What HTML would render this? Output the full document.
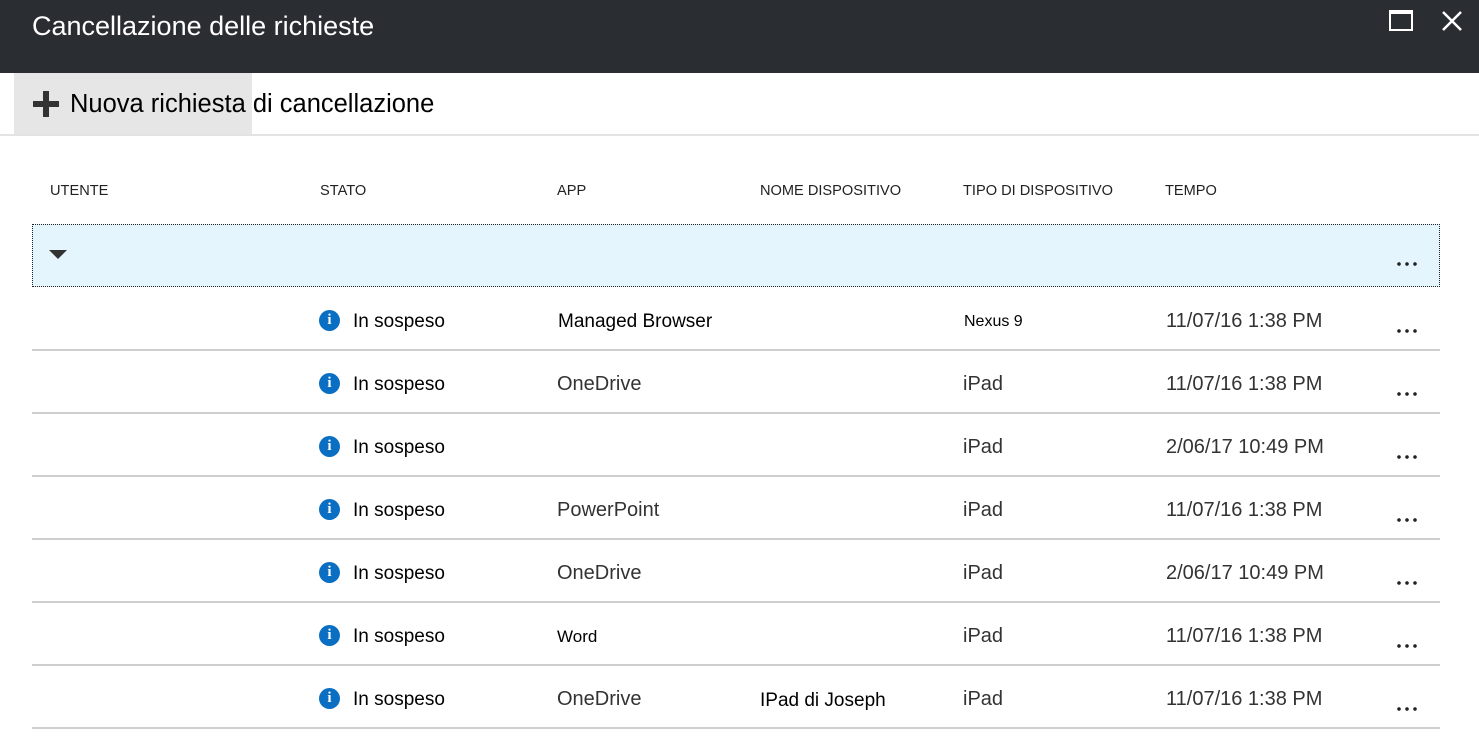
<!DOCTYPE html>
<html><head><meta charset="utf-8"><style>
body{margin:0;width:1479px;height:739px;background:#fff;font-family:"Liberation Sans",sans-serif;position:relative;overflow:hidden}
.hdr{position:absolute;left:0;top:0;width:1479px;height:73px;background:#2a2d32}
.title{position:absolute;left:32px;top:11px;color:#fff;font-size:27px}
.btn{position:absolute;left:14px;top:73px;width:238px;height:61px;background:#e6e6e6}
.tb{position:absolute;left:70px;top:90px;font-size:25.5px;color:#000}
.div{position:absolute;left:0;top:134px;width:1479px;height:2px;background:#e3e3e3}
.th{position:absolute;top:183px;font-size:14.6px;color:#222}
.grp{position:absolute;left:32px;top:224px;width:1406px;height:61px;background:#e5f5fd;border:1px dotted #222}
.t{position:absolute;font-size:19px}
.g{color:#333;font-size:20px}
.line{position:absolute;left:32px;width:1408px;height:2px;background:#cfcfcf}
.ic{position:absolute;width:21px;height:21px;border-radius:50%;background:#0a6fc2;color:#fff;font:bold 15px "Liberation Serif",serif;text-align:center;line-height:21px}
.dots{position:absolute;left:1395px;width:24px;height:4px;background:radial-gradient(circle,#222 1.6px,transparent 2px) 0 0/8px 4px repeat-x}
</style></head><body>
<div class="hdr"><div class="title">Cancellazione delle richieste</div>
<div style="position:absolute;left:1389px;top:10px;border:2px solid #fff;border-top-width:4px;box-sizing:border-box;width:24px;height:21px"></div>
<svg style="position:absolute;left:1441px;top:10px" width="22" height="22"><path d="M2 2L20 20M20 2L2 20" stroke="#fff" stroke-width="2.5"/></svg>
</div>
<div class="btn"></div>
<svg style="position:absolute;left:32px;top:90px" width="28" height="28"><path d="M14 1V27M1 14H27" stroke="#333" stroke-width="6"/></svg>
<div class="tb">Nuova richiesta di cancellazione</div>
<div class="div"></div>
<div class="th" style="left:50px">UTENTE</div>
<div class="th" style="left:320px">STATO</div>
<div class="th" style="left:557px">APP</div>
<div class="th" style="left:760px">NOME DISPOSITIVO</div>
<div class="th" style="left:963px">TIPO DI DISPOSITIVO</div>
<div class="th" style="left:1165px">TEMPO</div>
<div class="grp"></div>
<svg style="position:absolute;left:49px;top:250px" width="18" height="10"><path d="M0 0H18L9 9Z" fill="#333"/></svg>
<div class="dots" style="top:262px"></div>

<div class="ic" style="left:319px;top:310px">i</div><div class="t" style="left:353px;top:311px">In sospeso</div><div class="t" style="left:558px;top:311px">Managed Browser</div><div class="t" style="left:964px;top:313px;font-size:16px">Nexus 9</div><div class="t g" style="left:1166px;top:310px">11/07/16 1:38 PM</div><div class="dots" style="top:329px"></div><div class="line" style="top:349px"></div>

<div class="ic" style="left:319px;top:373px">i</div><div class="t" style="left:353px;top:374px">In sospeso</div><div class="t g" style="left:557px;top:373px">OneDrive</div><div class="t g" style="left:963px;top:373px">iPad</div><div class="t g" style="left:1166px;top:373px">11/07/16 1:38 PM</div><div class="dots" style="top:392px"></div><div class="line" style="top:412px"></div>

<div class="ic" style="left:319px;top:436px">i</div><div class="t" style="left:353px;top:437px">In sospeso</div><div class="t g" style="left:963px;top:436px">iPad</div><div class="t g" style="left:1166px;top:436px">2/06/17 10:49 PM</div><div class="dots" style="top:455px"></div><div class="line" style="top:475px"></div>

<div class="ic" style="left:319px;top:499px">i</div><div class="t" style="left:353px;top:500px">In sospeso</div><div class="t g" style="left:557px;top:499px">PowerPoint</div><div class="t g" style="left:963px;top:499px">iPad</div><div class="t g" style="left:1166px;top:499px">11/07/16 1:38 PM</div><div class="dots" style="top:518px"></div><div class="line" style="top:538px"></div>

<div class="ic" style="left:319px;top:562px">i</div><div class="t" style="left:353px;top:563px">In sospeso</div><div class="t g" style="left:557px;top:562px">OneDrive</div><div class="t g" style="left:963px;top:562px">iPad</div><div class="t g" style="left:1166px;top:562px">2/06/17 10:49 PM</div><div class="dots" style="top:581px"></div><div class="line" style="top:601px"></div>

<div class="ic" style="left:319px;top:625px">i</div><div class="t" style="left:353px;top:626px">In sospeso</div><div class="t" style="left:557px;top:627px;font-size:17px">Word</div><div class="t g" style="left:963px;top:625px">iPad</div><div class="t g" style="left:1166px;top:625px">11/07/16 1:38 PM</div><div class="dots" style="top:644px"></div><div class="line" style="top:664px"></div>

<div class="ic" style="left:319px;top:688px">i</div><div class="t" style="left:353px;top:689px">In sospeso</div><div class="t g" style="left:557px;top:688px">OneDrive</div><div class="t" style="left:760px;top:690px">IPad di Joseph</div><div class="t g" style="left:963px;top:688px">iPad</div><div class="t g" style="left:1166px;top:688px">11/07/16 1:38 PM</div><div class="dots" style="top:707px"></div><div class="line" style="top:727px"></div>
</body></html>
